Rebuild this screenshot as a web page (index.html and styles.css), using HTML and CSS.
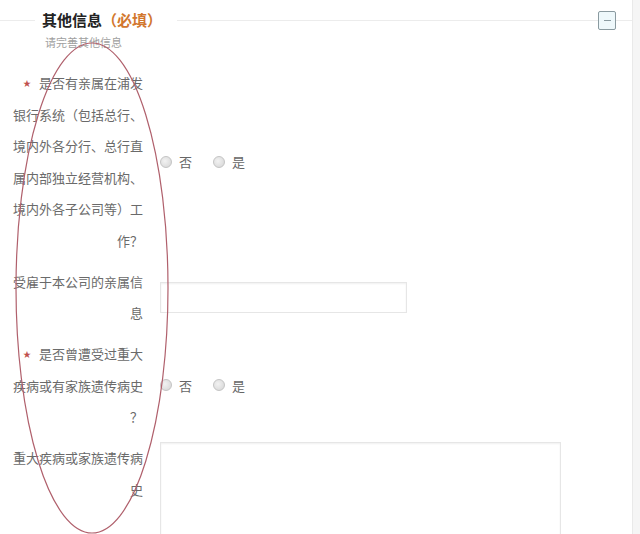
FILE: index.html
```html
<!DOCTYPE html>
<html lang="zh-CN">
<head>
    <meta charset="UTF-8">
    <meta name="viewport" content="width=device-width, initial-scale=1.0">
    <title>其他信息</title>
    <link rel="stylesheet" href="styles.css">
</head>
<body>
    <div class="page">
        <div class="header">
            <span class="line line-left"></span>
            <h2 class="title">其他信息<span class="required">（必填）</span></h2>
            <span class="line line-mid"></span>
            <button class="toggle" title="收起"><span class="minus"></span></button>
            <span class="line line-right"></span>
        </div>
        <p class="subtitle">请完善其他信息</p>

        <div class="form">
            <div class="row">
                <label class="label must">是否有亲属在浦发银行系统（包括总行、境内外各分行、总行直属内部独立经营机构、境内外各子公司等）工作？</label>
                <div class="field">
                    <label class="radio"><span class="dot"></span>否</label>
                    <label class="radio"><span class="dot"></span>是</label>
                </div>
            </div>

            <div class="row">
                <label class="label">受雇于本公司的亲属信息</label>
                <div class="field">
                    <input type="text" class="text-input">
                </div>
            </div>

            <div class="row">
                <label class="label must">是否曾遭受过重大疾病或有家族遗传病史？</label>
                <div class="field">
                    <label class="radio"><span class="dot"></span>否</label>
                    <label class="radio"><span class="dot"></span>是</label>
                </div>
            </div>

            <div class="row row-top">
                <label class="label">重大疾病或家族遗传病史</label>
                <div class="field">
                    <textarea class="text-area"></textarea>
                </div>
            </div>
        </div>

        <!-- hand drawn circle over the label column -->
        <svg class="mark" width="640" height="534" viewBox="0 0 640 534">
            <ellipse cx="92" cy="288" rx="76" ry="245" fill="none" stroke="#b0606c" stroke-width="1.2"/>
        </svg>
    </div>
</body>
</html>
```

FILE: styles.css
```css
body {
    margin: 0;
    background: #f5f5f5;
    font-family: "Noto Sans CJK SC", "Noto Sans", sans-serif;
    color: #666;
}
.page {
    position: relative;
    width: 632px;
    height: 534px;
    overflow: hidden;
    background: #fff;
    border-right: 1px solid #e9e9e9;
}
.header {
    display: flex;
    align-items: center;
    height: 20px;
    padding-top: 10px;
}
.line {
    height: 0;
    border-top: 1px solid #ececec;
}
.line-left {
    width: 35px;
}
.line-mid {
    flex: 1;
}
.line-right {
    width: 16px;
}
.title {
    margin: 0;
    padding: 0 15px 0 7px;
    font-size: 15px;
    line-height: 20px;
    font-weight: bold;
    color: #222;
}
.required {
    color: #d2772e;
}
.toggle {
    width: 18px;
    height: 19px;
    padding: 0;
    border: 1px solid #8a9aa0;
    border-radius: 2px;
    background: #eef8fb;
    display: flex;
    align-items: center;
    justify-content: center;
}
.minus {
    width: 7px;
    border-top: 1px solid #8a9aa0;
}
.subtitle {
    margin: 5px 0 0 45px;
    font-size: 11px;
    line-height: 14px;
    color: #a0a0a0;
}
.form {
    padding: 18px 0 0 13px;
}
.row {
    display: flex;
    align-items: center;
    margin-bottom: 9.5px;
}
.row-top {
    align-items: flex-start;
}
.label {
    width: 130px;
    font-size: 13px;
    line-height: 31.5px;
    text-align: right;
    color: #6a6a6a;
    line-break: anywhere;
}
.must::before {
    content: "★";
    display: inline-block;
    width: 8px;
    margin-right: 8px;
    color: #c0504d;
    font-size: 8px;
    line-height: 10px;
    vertical-align: 2px;
    text-align: center;
}
.field {
    margin-left: 17px;
    display: flex;
    align-items: center;
}
.radio {
    display: flex;
    align-items: center;
    font-size: 13px;
    color: #666;
    margin-right: 21px;
}
.dot {
    width: 10px;
    height: 10px;
    border: 1px solid #c4c4c4;
    border-radius: 50%;
    background: radial-gradient(circle at 40% 40%, #f2f2f2, #d4d4d4);
    margin-right: 7px;
}
.text-input {
    width: 247px;
    height: 31px;
    box-sizing: border-box;
    border: 1px solid #e6e6e6;
    box-shadow: inset 0 1px 2px #f0f0f0;
    background: #fff;
}
.text-area {
    width: 401px;
    height: 130px;
    box-sizing: border-box;
    border: 1px solid #e6e6e6;
    box-shadow: inset 0 1px 2px #f0f0f0;
    resize: none;
    background: #fff;
}
.mark {
    position: absolute;
    left: 0;
    top: 0;
    pointer-events: none;
}
```
